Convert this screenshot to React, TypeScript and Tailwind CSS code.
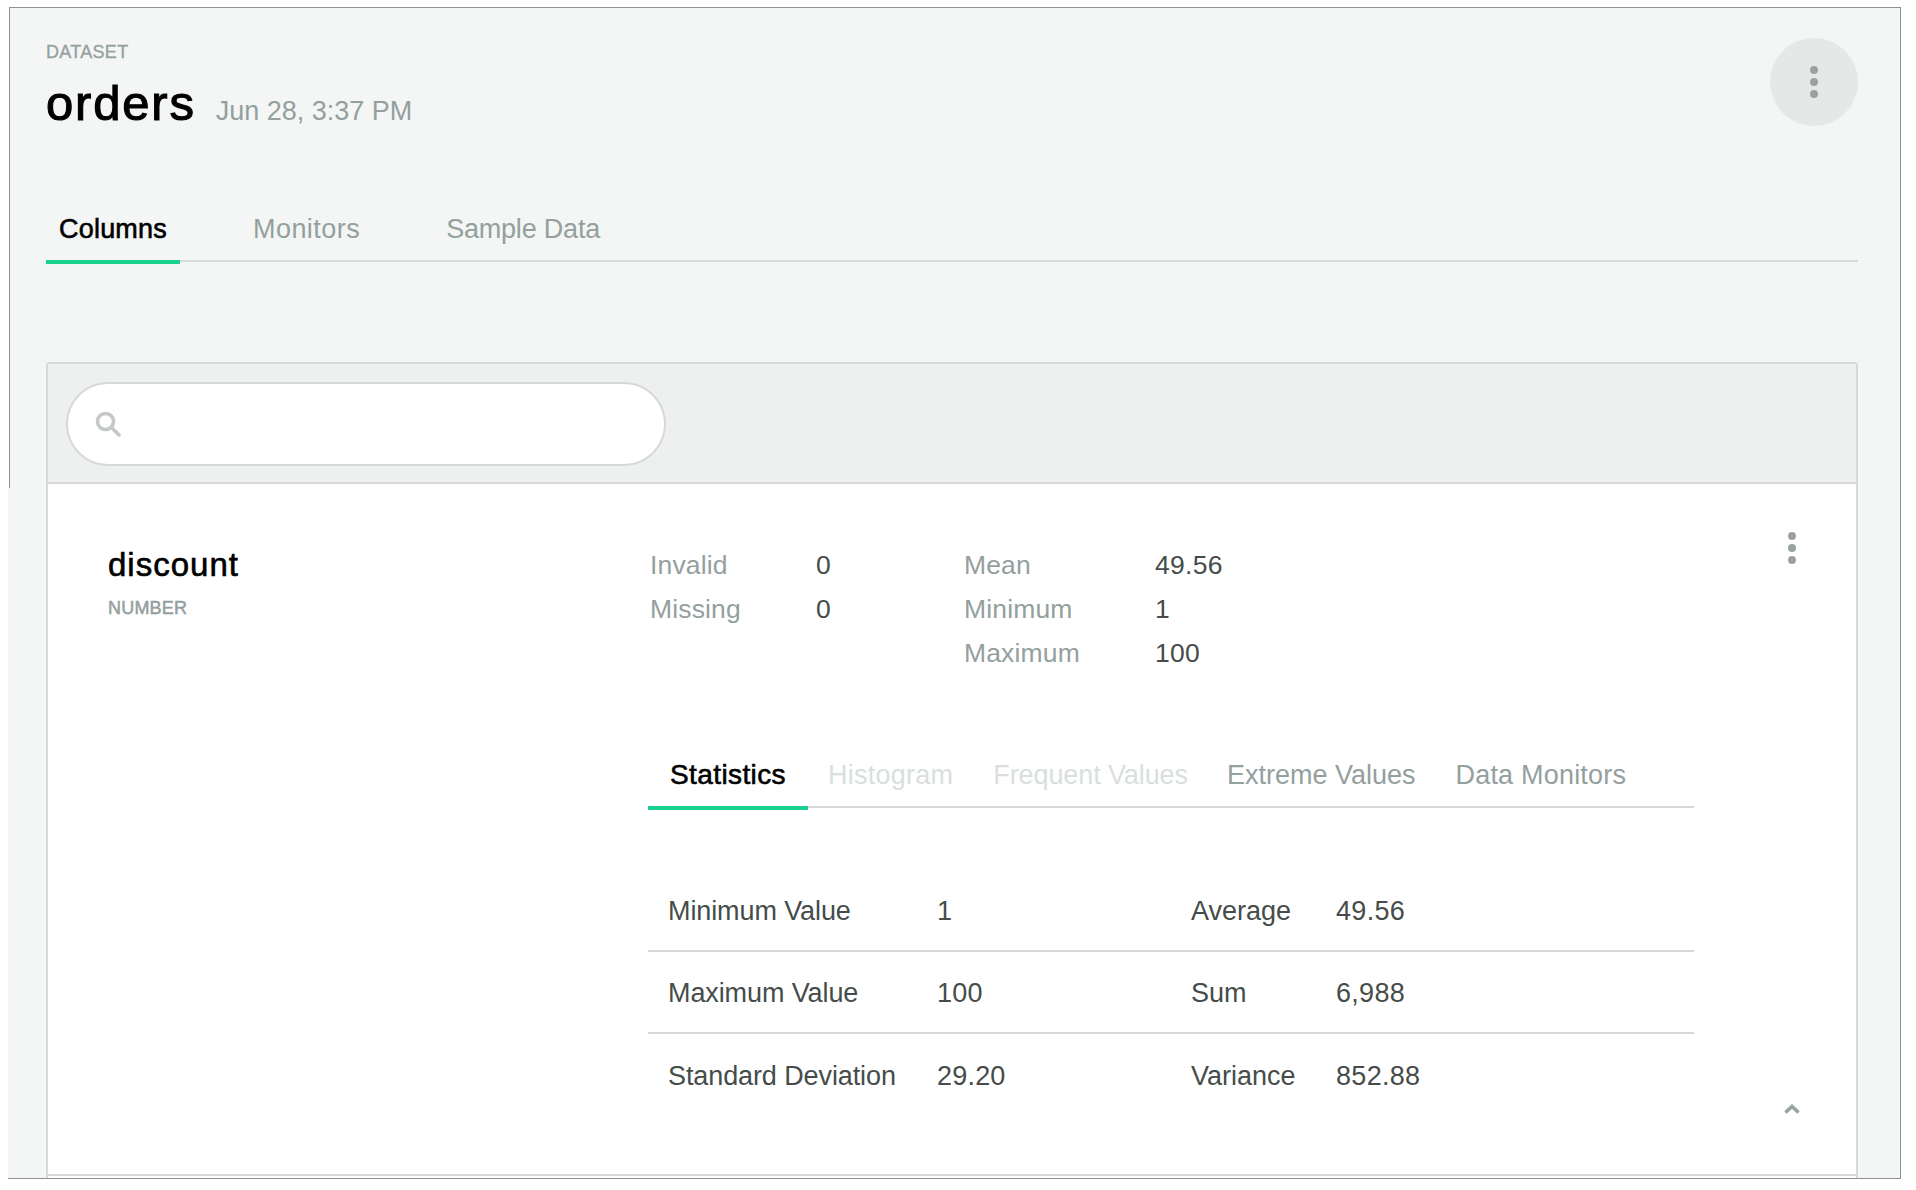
const sans = "font-['Liberation_Sans',Arial,sans-serif]";

function Dots() {
  return (
    <div className="flex flex-col gap-1">
      <span className="h-2 w-2 rounded-full bg-[#98a3a1]" />
      <span className="h-2 w-2 rounded-full bg-[#98a3a1]" />
      <span className="h-2 w-2 rounded-full bg-[#98a3a1]" />
    </div>
  );
}

function Stat({ label, value, labelWidth }: { label: string; value: string; labelWidth: string }) {
  return (
    <div className="flex h-11 items-center text-[26.5px]">
      <span className={`${labelWidth} tracking-[0.15px] text-[#93a09e]`}>{label}</span>
      <span className="tracking-[0.3px] text-[#454c4a]">{value}</span>
    </div>
  );
}

const rows = [
  ["Minimum Value", "1", "Average", "49.56"],
  ["Maximum Value", "100", "Sum", "6,988"],
  ["Standard Deviation", "29.20", "Variance", "852.88"],
];

export default function App() {
  return (
    <div className={`${sans} h-[1190px] w-[1916px] overflow-hidden bg-white pl-2 pt-[7px]`}>
      <div className="relative flex h-[1172px] w-[1893px] flex-col border-y border-r border-[#8f9190] bg-[#f4f6f5] pl-[38px] pr-[42px]">
        <div className="absolute -top-px left-0 h-[481px] w-[2px] border-r border-[#8f9190] bg-white" />

        <div className="flex justify-between">
          <div className="pt-[33px]">
            <div className="text-[18px] leading-[22px] tracking-[0.3px] text-[#93a09e] [-webkit-text-stroke:0.3px_#93a09e]">DATASET</div>
            <div className="mt-[11px] flex h-[58px] items-baseline">
              <span className="text-[49px] leading-[58px] tracking-[1.8px] text-black [-webkit-text-stroke:1.1px_black]">orders</span>
              <span className="ml-[20px] text-[27px] text-[#93a09e]">Jun 28, 3:37 PM</span>
            </div>
          </div>
          <div className="mt-[30px] flex h-[88px] w-[88px] items-center justify-center rounded-full bg-[#e6e8e7]">
            <Dots />
          </div>
        </div>

        <div className="mt-[65px] flex h-[65px] border-b-2 border-[#d6d9d8] text-[27px] text-[#93a09e]">
          <div className="-mb-[2px] flex h-[67px] w-[134px] items-center justify-center border-b-4 border-[#1bd18e] pt-[1px] tracking-[0.2px] text-black [-webkit-text-stroke:0.6px_black]">
            Columns
          </div>
          <div className="ml-[73px] flex items-center pt-[1px] tracking-[0.45px]">Monitors</div>
          <div className="ml-[86px] flex items-center pt-[1px] tracking-[-0.2px]">Sample Data</div>
        </div>

        <div className="mt-[100px] flex flex-1 flex-col rounded-t border-x-2 border-t-2 border-[#d6d9d8] bg-white">
          <div className="h-[120px] border-b-2 border-[#d6d9d8] bg-[#eef0ef] px-[18px] pt-[18px]">
            <div className="flex h-[84px] w-[600px] items-center rounded-full border-2 border-[#d6d9d8] bg-white pl-[26px]">
              <svg width="28" height="28" viewBox="0 0 28 28" fill="none" stroke="#c4c8c7" strokeWidth="3.6">
                <circle cx="11.5" cy="11.5" r="8" />
                <path d="M17.5 17.5 25 25" strokeLinecap="round" />
              </svg>
            </div>
          </div>

          <div className="relative mb-[2px] flex flex-1 border-b-2 border-[#d6d9d8] pl-[60px]">
            <div className="w-[540px] pt-[61px]">
              <div className="text-[33px] leading-[40px] tracking-[1px] text-black [-webkit-text-stroke:0.6px_black]">discount</div>
              <div className="mt-[12px] text-[18px] leading-[22px] tracking-[0.2px] text-[#93a09e] [-webkit-text-stroke:0.5px_#93a09e]">NUMBER</div>
            </div>

            <div className="w-[1046px] pt-[60px]">
              <div className="flex pl-[2px]">
                <div className="w-[314px]">
                  <Stat label="Invalid" value="0" labelWidth="w-[166px]" />
                  <Stat label="Missing" value="0" labelWidth="w-[166px]" />
                </div>
                <div>
                  <Stat label="Mean" value="49.56" labelWidth="w-[191px]" />
                  <Stat label="Minimum" value="1" labelWidth="w-[191px]" />
                  <Stat label="Maximum" value="100" labelWidth="w-[191px]" />
                </div>
              </div>

              <div className="mt-[68px] flex h-[64px] border-b-2 border-[#d6d9d8] text-[27px]">
                <div className="-mb-[2px] flex h-[66px] w-[160px] items-center justify-center border-b-4 border-[#1bd18e] text-[28px] tracking-[0.4px] text-black [-webkit-text-stroke:0.6px_black]">
                  Statistics
                </div>
                <div className="ml-[20px] flex items-center tracking-[0.25px] text-[#d9dfdd]">Histogram</div>
                <div className="ml-[40px] flex items-center tracking-[-0.1px] text-[#d9dfdd]">Frequent Values</div>
                <div className="ml-[39px] flex items-center text-[#93a09e]">Extreme Values</div>
                <div className="ml-[40px] flex items-center tracking-[0.2px] text-[#93a09e]">Data Monitors</div>
              </div>

              <div className="mt-[62px]">
                {rows.map((r, i) => (
                  <div key={r[0]} className={`flex h-[82px] items-center pl-[20px] pt-[2px] text-[27px] text-[#454c4a] ${i < 2 ? "border-b-2 border-[#d6d9d8]" : ""}`}>
                    <span className="w-[269px] tracking-[-0.1px]">{r[0]}</span>
                    <span className="w-[254px] tracking-[0.2px]">{r[1]}</span>
                    <span className="w-[145px]">{r[2]}</span>
                    <span className="tracking-[0.3px]">{r[3]}</span>
                  </div>
                ))}
              </div>
            </div>

            <div className="absolute right-[60px] top-[48px]">
              <Dots />
            </div>
            <svg className="absolute bottom-[60px] right-[56px]" width="16" height="10" viewBox="0 0 16 10" fill="none" stroke="#98a3a1" strokeWidth="3.5">
              <path d="M1.5 8.5 8 2.5l6.5 6" />
            </svg>
          </div>
        </div>
      </div>
    </div>
  );
}
